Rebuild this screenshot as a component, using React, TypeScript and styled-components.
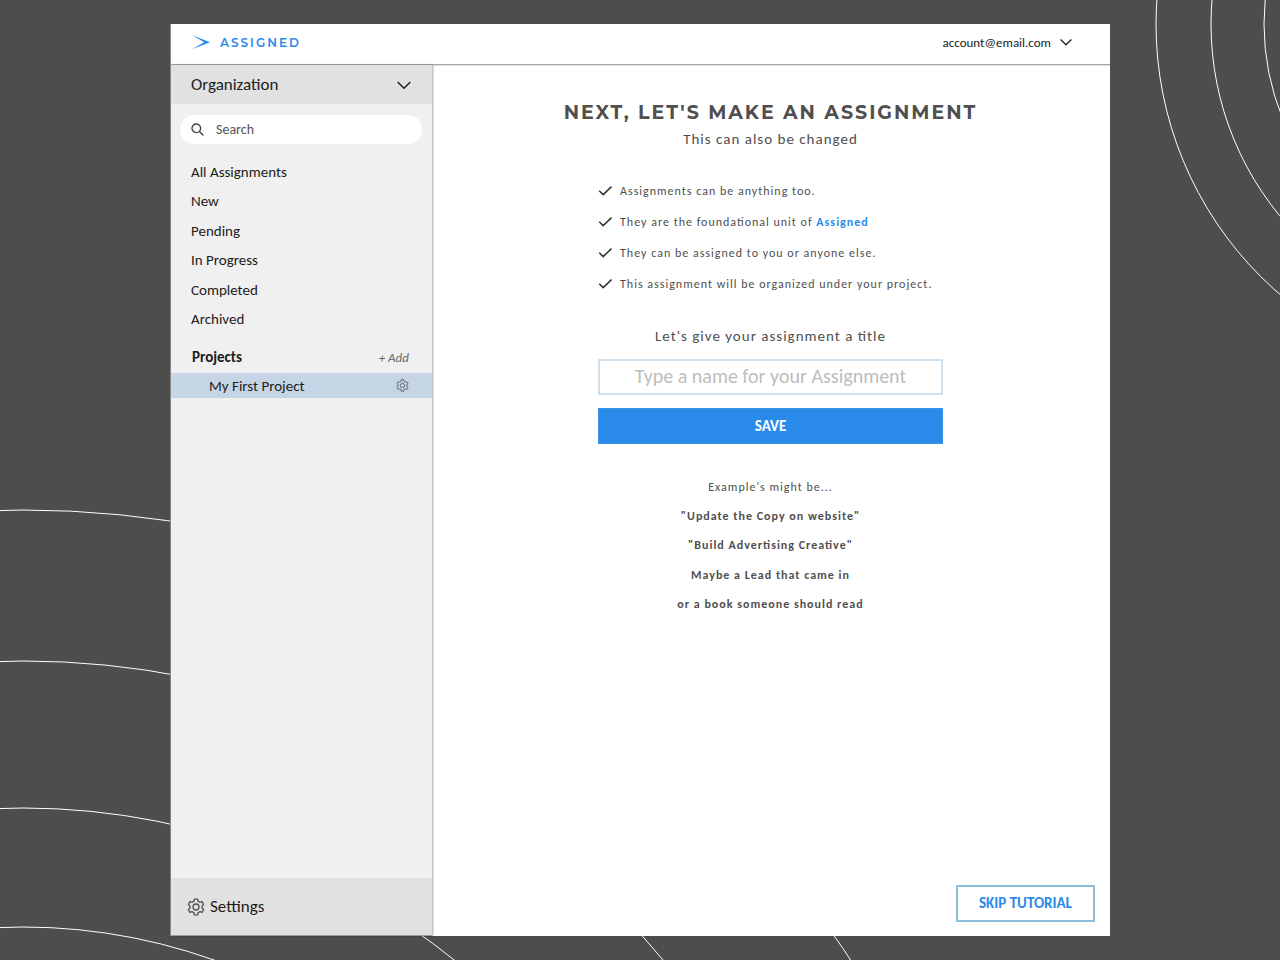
import React from "react";
import styled, { createGlobalStyle } from "styled-components";

const ink = "#4f4f4f";
const blue = "#2a8aea";
const bodyFont = `Carlito, Lato, "Noto Sans", sans-serif`;
const displayFont = `Montserrat, Inter, "Open Sans", sans-serif`;

const GlobalStyle = createGlobalStyle`
  *, *::before, *::after { box-sizing: border-box; }
  body {
    margin: 0;
    background: #4d4d4d;
    color: #1c1c1c;
    font-family: ${bodyFont};
    font-size: 15px;
    font-feature-settings: "liga" 1;
  }
  button, input { font-family: inherit; color: inherit; }
  ul, h1, h2, p { margin: 0; padding: 0; }
  ul { list-style: none; }
`;

const Page = styled.div`
  position: relative;
  display: flex;
  justify-content: center;
  min-height: 100vh;
  padding: 24px;
  overflow: hidden;
`;

const Rings = styled.svg<{ $corner: "top" | "bottom" }>`
  position: absolute;
  ${(p) => (p.$corner === "top" ? "top: 0; right: 0;" : "bottom: 0; left: 0;")}
  fill: none;
  stroke: #fff;
  stroke-width: 1;
`;

const Frame = styled.div`
  position: relative;
  display: flex;
  flex-direction: column;
  width: 100%;
  max-width: 940px;
  background: #fff;
  border-left: 1px solid #8a8a8a;
`;

const TopBar = styled.header`
  display: flex;
  align-items: center;
  justify-content: space-between;
  height: 41px;
  padding: 0 38px 4px 20px;
  border-bottom: 1px solid #a8a8a8;
  box-shadow: 0 1px 0 #dedede;
`;

const Brand = styled.a`
  display: flex;
  align-items: center;
  gap: 10px;
  color: ${blue};
  font-family: ${displayFont};
  font-size: 12px;
  font-weight: 600;
  letter-spacing: 2px;
  text-decoration: none;
`;

const PlainButton = styled.button`
  display: flex;
  align-items: center;
  padding: 0;
  border: 0;
  background: none;
  cursor: pointer;
`;

const AccountButton = styled(PlainButton)`
  gap: 9px;
  font-size: 13px;
`;

const Body = styled.div`
  display: flex;
  flex: 1;
`;

const Sidebar = styled.aside`
  display: flex;
  flex-direction: column;
  flex: 0 0 261px;
  background: #f0f0f0;
  border-bottom: 1px solid #9c9c9c;
  box-shadow: 1px 0 2px rgba(0, 0, 0, 0.35);
`;

const OrgButton = styled(PlainButton)`
  justify-content: space-between;
  height: 39px;
  padding: 0 21px 0 20px;
  background: #e1e1e1;
  font-size: 17px;
`;

const SearchBox = styled.label`
  display: flex;
  align-items: center;
  gap: 12px;
  height: 29px;
  margin: 11px 10px 13px 9px;
  padding: 0 11px;
  border-radius: 15px;
  background: #fff;
`;

const SearchInput = styled.input`
  flex: 1;
  min-width: 0;
  padding: 0;
  border: 0;
  outline: 0;
  background: none;
  font-size: 14px;
  &::placeholder { color: #555; opacity: 1; }
`;

const FilterList = styled.ul`
  display: grid;
  grid-auto-rows: 1fr;
  align-items: center;
  height: 177px;
  padding-left: 20px;
`;

const NavLink = styled.a`
  color: #1c1c1c;
  font-size: 15px;
  text-decoration: none;
`;

const ProjectsHeader = styled.div`
  display: flex;
  align-items: center;
  justify-content: space-between;
  height: 32px;
  margin-top: 7px;
  padding: 0 23px 0 21px;
`;

const ProjectsTitle = styled.h2`
  font-size: 15px;
  font-weight: 700;
`;

const AddButton = styled(PlainButton)`
  color: #666;
  font-size: 13px;
  font-style: italic;
`;

const ProjectRow = styled.div`
  display: flex;
  align-items: center;
  justify-content: space-between;
  height: 25px;
  padding: 0 23px 0 38px;
  background: #c6d5e6;
`;

const SettingsButton = styled(PlainButton)`
  gap: 5px;
  height: 57px;
  margin-top: auto;
  padding: 0 16px;
  background: #e1e1e1;
  font-size: 17px;
`;

const Main = styled.main`
  display: flex;
  flex-direction: column;
  align-items: center;
  flex: 1;
  padding: 34px 15px 14px 14px;
  color: ${ink};
`;

const Title = styled.h1`
  font-family: ${displayFont};
  font-size: 19px;
  font-weight: 700;
  line-height: 28px;
  letter-spacing: 2px;
  text-align: center;
`;

const Lead = styled.p`
  font-size: 15px;
  line-height: 24px;
  letter-spacing: 1px;
`;

const Column = styled.form`
  display: flex;
  flex-direction: column;
  width: 100%;
  max-width: 345px;
`;

const Facts = styled.ul`
  display: grid;
  grid-auto-rows: 1fr;
  height: 125px;
  margin: 24px 0;
`;

const Fact = styled.li`
  display: flex;
  align-items: center;
  gap: 8px;
  font-size: 12px;
  letter-spacing: 1px;
  white-space: nowrap;
`;

const BrandWord = styled.strong`
  color: ${blue};
`;

const FieldLabel = styled.label`
  font-size: 15px;
  line-height: 24px;
  letter-spacing: 1px;
  text-align: center;
`;

const TitleInput = styled.input`
  height: 36px;
  margin: 11px 0 13px;
  padding: 0 8px 2px;
  border: 2px solid #cfdfec;
  outline: 0;
  background: #fff;
  font-size: 20px;
  text-align: center;
  &::placeholder { color: #bdbdbd; opacity: 1; }
`;

const SaveButton = styled.button`
  height: 36px;
  border: 1px solid #3b92e4;
  background: ${blue};
  color: #fff;
  font-size: 15px;
  font-weight: 700;
  cursor: pointer;
`;

const Examples = styled.ul`
  display: grid;
  grid-auto-rows: 1fr;
  align-items: center;
  height: 147px;
  margin-top: 28px;
  text-align: center;
`;

const Example = styled.li<{ $strong?: boolean }>`
  font-size: 12px;
  font-weight: ${(p) => (p.$strong ? 700 : 400)};
  letter-spacing: 1px;
`;

const SkipButton = styled.button`
  align-self: flex-end;
  width: 139px;
  height: 37px;
  margin-top: auto;
  padding-bottom: 2px;
  border: 2px solid #8dbddd;
  background: #fff;
  color: ${blue};
  font-size: 15px;
  font-weight: 700;
  cursor: pointer;
`;

const Chevron = ({ width }: { width: number }) => (
  <svg width={width} height={width} viewBox="0 0 14 14" fill="none" stroke="#222" strokeWidth="1.5" aria-hidden="true">
    <path d="M.7 4 7 10.3 13.3 4" />
  </svg>
);

const Check = () => (
  <svg width="14" height="12" viewBox="0 0 14 12" fill="none" stroke="#333" strokeWidth="1.5" aria-hidden="true">
    <path d="M1.200 5.800 5.200 9.600 13.500 1.600" />
  </svg>
);

const gearPath = (() => {
  const points: string[] = [];
  for (let i = 0; i < 6; i++) {
    const at = (deg: number, r: number) => {
      const a = ((i * 60 - 90 + deg) * Math.PI) / 180;
      return `${(10 + r * Math.cos(a)).toFixed(2)} ${(10 + r * Math.sin(a)).toFixed(2)}`;
    };
    points.push(at(-12, 9), at(12, 9), at(18, 6.9), at(42, 6.9));
  }
  return `M${points.join("L")}Z`;
})();

const Gear = ({ size, color }: { size: number; color: string }) => (
  <svg width={size} height={size} viewBox="0 0 20 20" fill="none" stroke={color} strokeWidth="1.5" strokeLinejoin="round" aria-hidden="true">
    <path d={gearPath} />
    <circle cx="10" cy="10" r="3.3" />
  </svg>
);

const filters = ["All Assignments", "New", "Pending", "In Progress", "Completed", "Archived"];

const facts: React.ReactNode[] = [
  "Assignments can be anything too.",
  <>They are the foundational unit of <BrandWord>Assigned</BrandWord></>,
  "They can be assigned to you or anyone else.",
  "This assignment will be organized under your project.",
];

const examples = [
  '"Update the Copy on website"',
  '"Build Advertising Creative"',
  "Maybe a Lead that came in",
  "or a book someone should read",
];

export default function App() {
  return (
    <>
      <GlobalStyle />
      <Page>
        <Rings $corner="top" width="130" height="310" viewBox="0 0 130 310" aria-hidden="true">
          {[357, 302, 249].map((r) => (
            <circle key={r} cx="363" cy="24" r={r} />
          ))}
        </Rings>
        <Rings $corner="bottom" width="860" height="460" viewBox="0 0 860 460" aria-hidden="true">
          {[986, 835, 688, 569].map((r) => (
            <circle key={r} cx="23" cy="996" r={r} />
          ))}
        </Rings>
        <Frame>
          <TopBar>
            <Brand href="#">
              <svg width="19" height="16" viewBox="0 0 19 16" fill={blue} aria-hidden="true">
                <path d="M.8 1 19 8.300 1 15.200 13.200 8.300Z" />
              </svg>
              ASSIGNED
            </Brand>
            <AccountButton type="button">
              account@email.com
              <Chevron width={12} />
            </AccountButton>
          </TopBar>
          <Body>
            <Sidebar>
              <OrgButton type="button">
                Organization
                <Chevron width={14} />
              </OrgButton>
              <SearchBox>
                <svg width="13" height="13" viewBox="0 0 13 13" fill="none" stroke="#444" strokeWidth="1.4" aria-label="Search">
                  <circle cx="5.300" cy="5.300" r="4.300" />
                  <path d="m8.400 8.400 4 4" />
                </svg>
                <SearchInput type="search" placeholder="Search" />
              </SearchBox>
              <FilterList>
                {filters.map((f) => (
                  <li key={f}>
                    <NavLink href="#">{f}</NavLink>
                  </li>
                ))}
              </FilterList>
              <ProjectsHeader>
                <ProjectsTitle>Projects</ProjectsTitle>
                <AddButton type="button">+ Add</AddButton>
              </ProjectsHeader>
              <ProjectRow>
                <NavLink href="#">My First Project</NavLink>
                <PlainButton type="button" aria-label="Project settings">
                  <Gear size={13} color="#59636e" />
                </PlainButton>
              </ProjectRow>
              <SettingsButton type="button">
                <Gear size={18} color="#555" />
                Settings
              </SettingsButton>
            </Sidebar>
            <Main>
              <Title>NEXT, LET'S MAKE AN ASSIGNMENT</Title>
              <Lead>This can also be changed</Lead>
              <Column onSubmit={(e) => e.preventDefault()}>
                <Facts>
                  {facts.map((fact, i) => (
                    <Fact key={i}>
                      <Check />
                      <span>{fact}</span>
                    </Fact>
                  ))}
                </Facts>
                <FieldLabel htmlFor="assignment-title">Let's give your assignment a title</FieldLabel>
                <TitleInput id="assignment-title" placeholder="Type a name for your Assignment" />
                <SaveButton type="submit">SAVE</SaveButton>
                <Examples>
                  <Example>Example's might be...</Example>
                  {examples.map((e) => (
                    <Example key={e} $strong>{e}</Example>
                  ))}
                </Examples>
              </Column>
              <SkipButton type="button">SKIP TUTORIAL</SkipButton>
            </Main>
          </Body>
        </Frame>
      </Page>
    </>
  );
}
